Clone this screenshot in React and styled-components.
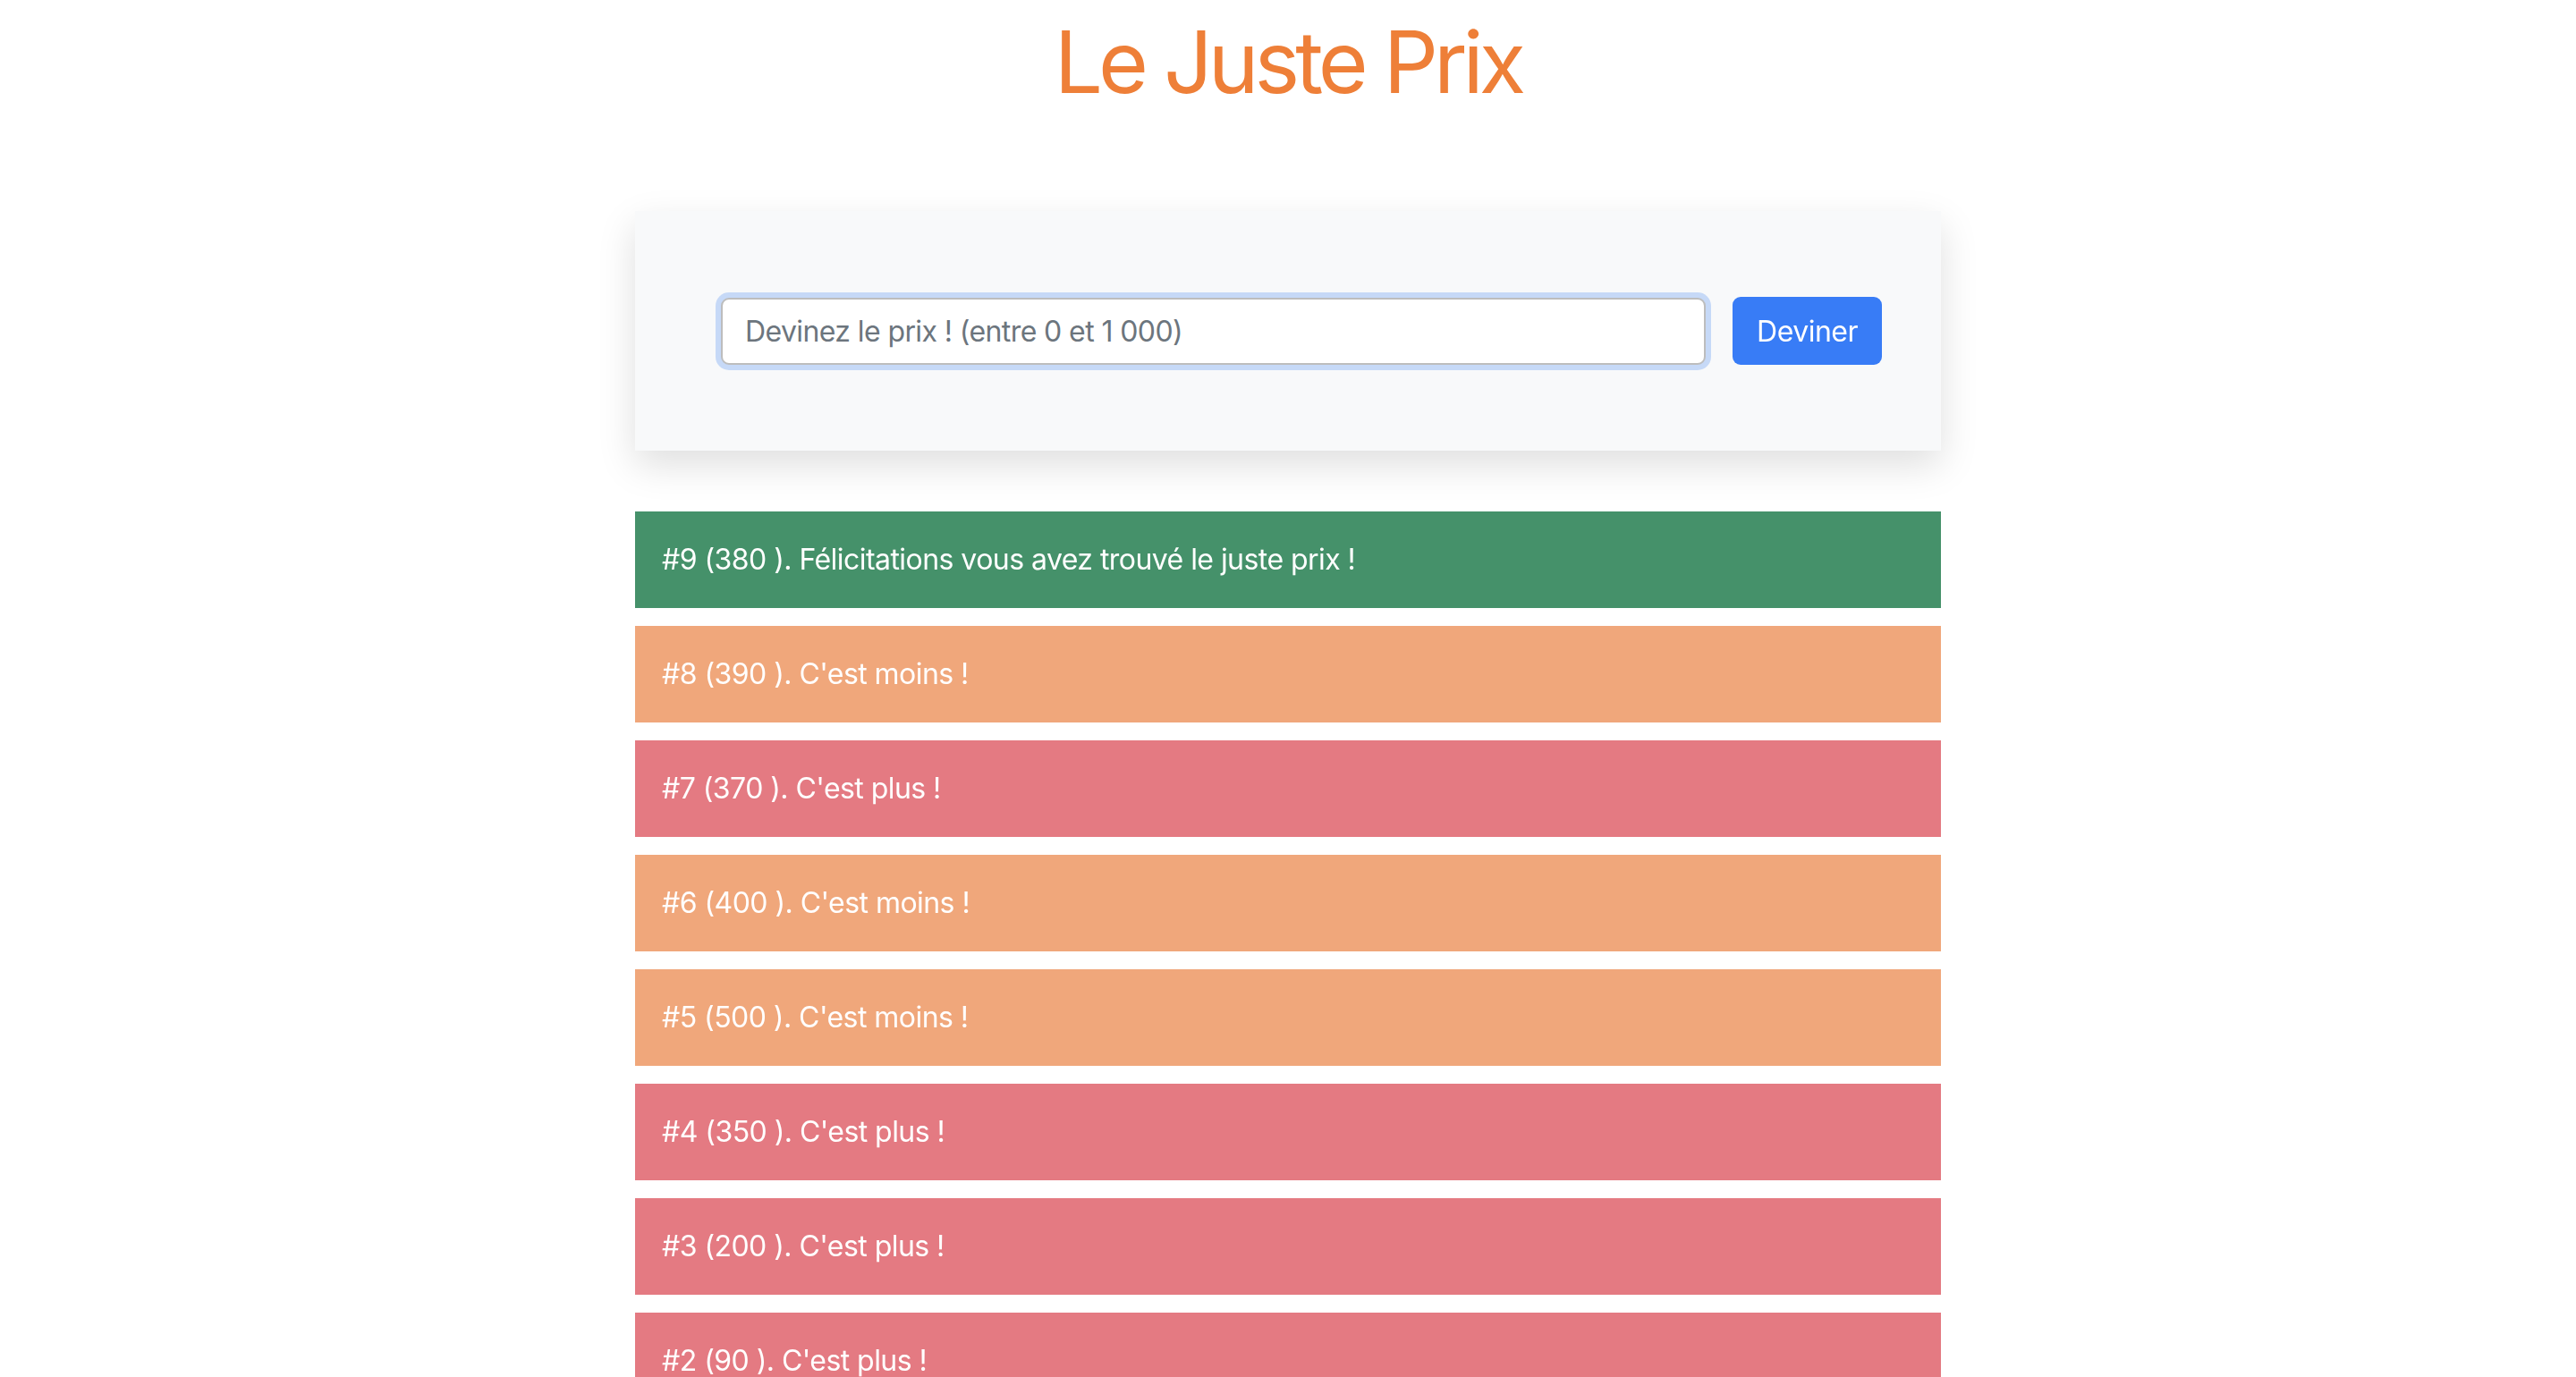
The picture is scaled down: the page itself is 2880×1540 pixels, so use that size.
import React from 'react';
import styled, { createGlobalStyle } from 'styled-components';

const GlobalStyle = createGlobalStyle`
    body {
        margin: 0;
        background: #fff;
        font-family: Inter, "Noto Sans", sans-serif;
    }
`;

const Page = styled.div`
    width: 1460px;
    margin: 0 auto;
    padding-top: 12px;
`;

const Title = styled.h1`
    margin: 0 0 109px;
    font-size: 96px;
    line-height: 115px;
    font-weight: 400;
    color: #ee7f38;
    text-align: center;
    letter-spacing: -5px;
`;

const Card = styled.form`
    display: flex;
    align-items: center;
    gap: 30px;
    padding: 96px 66px 96px 96px;
    background: #f8f9fa;
    box-shadow: 0 16px 40px rgba(0, 0, 0, 0.13);
    margin-bottom: 68px;
`;

const Input = styled.input`
    flex: 1;
    height: 75px;
    box-sizing: border-box;
    padding: 0 25px;
    font-family: inherit;
    font-size: 32px;
    letter-spacing: -0.6px;
    color: #212529;
    background: #fff;
    border: 2px solid #bdbdbd;
    border-radius: 9px;
    box-shadow: 0 0 0 6px #c6d9f7;
    outline: none;
    &::placeholder {
        color: #6c757d;
    }
`;

const Button = styled.button`
    height: 76px;
    padding: 0 27px;
    font-family: inherit;
    font-size: 32px;
    letter-spacing: -0.5px;
    color: #fff;
    background: #387cf6;
    border: none;
    border-radius: 9px;
`;

const List = styled.ul`
    list-style: none;
    margin: 0;
    padding: 0;
    display: flex;
    flex-direction: column;
    gap: 20px;
`;

const colors = {
    win: '#45916a',
    less: '#f0a77b',
    more: '#e47a82',
};

const Item = styled.li`
    padding: 30px;
    font-size: 32px;
    line-height: 48px;
    letter-spacing: -0.55px;
    color: #fff;
    background: ${p => colors[p.$kind]};
`;

const messages = {
    win: 'Félicitations vous avez trouvé le juste prix !',
    less: "C'est moins !",
    more: "C'est plus !",
};

const guesses = [
    { n: 9, value: 380, kind: 'win' },
    { n: 8, value: 390, kind: 'less' },
    { n: 7, value: 370, kind: 'more' },
    { n: 6, value: 400, kind: 'less' },
    { n: 5, value: 500, kind: 'less' },
    { n: 4, value: 350, kind: 'more' },
    { n: 3, value: 200, kind: 'more' },
    { n: 2, value: 90, kind: 'more' },
    { n: 1, value: 50, kind: 'more' },
];

export default function App() {
    return (
        <Page>
            <GlobalStyle />
            <Title>Le Juste Prix</Title>
            <Card onSubmit={e => e.preventDefault()}>
                <Input placeholder="Devinez le prix ! (entre 0 et 1 000)" autoFocus />
                <Button type="submit">Deviner</Button>
            </Card>
            <List>
                {guesses.map(g => (
                    <Item key={g.n} $kind={g.kind}>
                        #{g.n} ({g.value} ). {messages[g.kind]}
                    </Item>
                ))}
            </List>
        </Page>
    );
}
